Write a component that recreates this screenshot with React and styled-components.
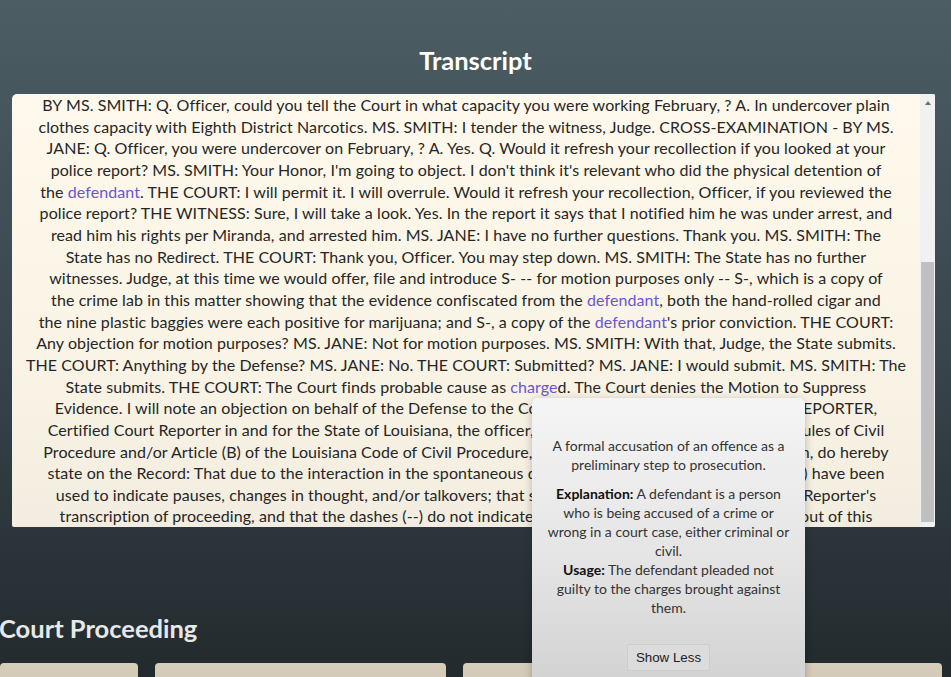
import React from "react";
import styled, { createGlobalStyle } from "styled-components";

const GlobalStyle = createGlobalStyle`
  html, body {
    margin: 0;
    padding: 0;
    height: 100%;
  }
  body {
    font-family: "Lato", "Noto Sans", sans-serif;
    background: #1f2629;
    overflow: hidden;
  }
`;

const Page = styled.div`
  position: relative;
  height: 100vh;
  overflow: hidden;
  display: flex;
  flex-direction: column;
  background: linear-gradient(to bottom, #4c5d64 0%, #3b494f 45%, #222a2d 100%);

  & > * {
    flex-shrink: 0;
  }
`;

const SectionTitle = styled.h2`
  margin: 0;
  font-size: 25.5px;
  line-height: 32px;
  font-weight: 700;
  color: ${(p) => p.$color || "#ffffff"};
  text-align: ${(p) => p.$align || "center"};
  padding-top: ${(p) => p.$top || 0}px;
`;

const TranscriptBox = styled.div`
  margin: 18px 16px 0 12px;
  height: 433px;
  display: flex;
  border-radius: 5px 2px 2px 2px;
  overflow: hidden;
  background: linear-gradient(to bottom, #fef9ec 0%, #f9f4e5 60%, #f2ede0 100%);
`;

const TextPane = styled.div`
  flex: 1;
  overflow: hidden;
  text-align: center;
  font-size: 16px;
  letter-spacing: 0.08px;
  line-height: 21.65px;
  color: #262626;
`;

const Line = styled.span`
  display: block;
  white-space: nowrap;
`;

const Term = styled.span`
  color: #6a55d4;
  cursor: pointer;
`;

const ScrollTrack = styled.div`
  width: 15px;
  display: flex;
  flex-direction: column;
  align-items: center;
  background: #f1f1f1;
`;

const ArrowUp = styled.div`
  height: 17px;
  display: flex;
  align-items: center;
  justify-content: center;
  &::before {
    content: "";
    border-left: 3.5px solid transparent;
    border-right: 3.5px solid transparent;
    border-bottom: 4px solid #6e6e6e;
  }
`;

const Thumb = styled.div`
  width: 13px;
  background: #c0c0c0;
`;

const ProceedingTitle = styled(SectionTitle)`
  margin-top: 85px;
  margin-left: -1px;
`;

const CardRow = styled.div`
  margin-top: 19px;
  display: flex;
  gap: 17px;
`;

const Card = styled.div`
  flex: 0 0 ${(p) => p.$w}px;
  height: 60px;
  border-radius: 4px;
  background: linear-gradient(to bottom, #d6cdba 0%, #cbc2ad 100%);
`;

const Popup = styled.div`
  position: absolute;
  left: 532px;
  top: 398px;
  width: 273px;
  height: 300px;
  box-sizing: border-box;
  padding: 38px 14px 0;
  border-radius: 6px;
  background: linear-gradient(to bottom, #f5f5f5 0%, #e4e4e4 55%, #d0d0d0 100%);
  box-shadow: 0 2px 8px rgba(0, 0, 0, 0.25);
  text-align: center;
  font-size: 14px;
  line-height: 19px;
  color: #333333;
`;

const PopupText = styled.p`
  margin: 0 0 ${(p) => p.$gap || 0}px;
`;

const Label = styled.b`
  color: #111111;
  font-weight: 700;
`;

const ShowLess = styled.button`
  margin-top: 27px;
  height: 27px;
  padding: 0 8px;
  font-family: "Liberation Sans", Arial, sans-serif;
  font-size: 13.33px;
  color: #222222;
  background: #dcdcdc;
  border: 1px solid #cdcdcd;
  border-radius: 2px;
`;

const lines = [
  "BY MS. SMITH: Q. Officer, could you tell the Court in what capacity you were working February, ? A. In undercover plain",
  "clothes capacity with Eighth District Narcotics. MS. SMITH: I tender the witness, Judge. CROSS-EXAMINATION - BY MS.",
  "JANE: Q. Officer, you were undercover on February, ? A. Yes. Q. Would it refresh your recollection if you looked at your",
  "police report? MS. SMITH: Your Honor, I'm going to object. I don't think it's relevant who did the physical detention of",
  "the [defendant]. THE COURT: I will permit it. I will overrule. Would it refresh your recollection, Officer, if you reviewed the",
  "police report? THE WITNESS: Sure, I will take a look. Yes. In the report it says that I notified him he was under arrest, and",
  "read him his rights per Miranda, and arrested him. MS. JANE: I have no further questions. Thank you. MS. SMITH: The",
  "State has no Redirect. THE COURT: Thank you, Officer. You may step down. MS. SMITH: The State has no further",
  "witnesses. Judge, at this time we would offer, file and introduce S- -- for motion purposes only -- S-, which is a copy of",
  "the crime lab in this matter showing that the evidence confiscated from the [defendant], both the hand-rolled cigar and",
  "the nine plastic baggies were each positive for marijuana; and S-, a copy of the [defendant]'s prior conviction. THE COURT:",
  "Any objection for motion purposes? MS. JANE: Not for motion purposes. MS. SMITH: With that, Judge, the State submits.",
  "THE COURT: Anything by the Defense? MS. JANE: No. THE COURT: Submitted? MS. JANE: I would submit. MS. SMITH: The",
  "State submits. THE COURT: The Court finds probable cause as [charge]d. The Court denies the Motion to Suppress",
  "Evidence. I will note an objection on behalf of the Defense to the Court's ruling. CERTIFICATE I, COURT REPORTER,",
  "Certified Court Reporter in and for the State of Louisiana, the officer, as defined in Rule 28 of the Federal Rules of Civil",
  "Procedure and/or Article (B) of the Louisiana Code of Civil Procedure, before whom this testimony was taken, do hereby",
  "state on the Record: That due to the interaction in the spontaneous discourse of this proceeding, dashes (--) have been",
  "used to indicate pauses, changes in thought, and/or talkovers; that same is the proper method for a Court Reporter's",
  "transcription of proceeding, and that the dashes (--) do not indicate that words or phrases have been left out of this",
];

function renderLine(text, i) {
  const parts = text.split(/(\[[^\]]+\])/);
  return (
    <Line key={i}>
      {parts.map((part, j) =>
        part.startsWith("[") ? (
          <Term key={j}>{part.slice(1, -1)}</Term>
        ) : (
          <React.Fragment key={j}>{part}</React.Fragment>
        )
      )}
    </Line>
  );
}

function App() {
  const [open, setOpen] = React.useState(true);

  return (
    <>
      <GlobalStyle />
      <Page>
        <SectionTitle $top={44}>Transcript</SectionTitle>
        <TranscriptBox>
          <TextPane>{lines.map(renderLine)}</TextPane>
          <ScrollTrack>
            <ArrowUp />
            <Thumb style={{ marginTop: 151, height: 260 }} />
          </ScrollTrack>
        </TranscriptBox>

        <ProceedingTitle $align="left" $color="#e8e8e8">
          Court Proceeding
        </ProceedingTitle>
        <CardRow>
          <Card $w={138} />
          <Card $w={291} />
          <Card $w={479} />
        </CardRow>

        {open && (
          <Popup>
            <PopupText $gap={10}>
              A formal accusation of an offence as a preliminary step to
              prosecution.
            </PopupText>
            <PopupText>
              <Label>Explanation:</Label> A defendant is a person who is being
              accused of a crime or wrong in a court case, either criminal or
              civil.
            </PopupText>
            <PopupText>
              <Label>Usage:</Label> The defendant pleaded not guilty to the
              charges brought against them.
            </PopupText>
            <ShowLess onClick={() => setOpen(false)}>Show Less</ShowLess>
          </Popup>
        )}
      </Page>
    </>
  );
}

export default App;
